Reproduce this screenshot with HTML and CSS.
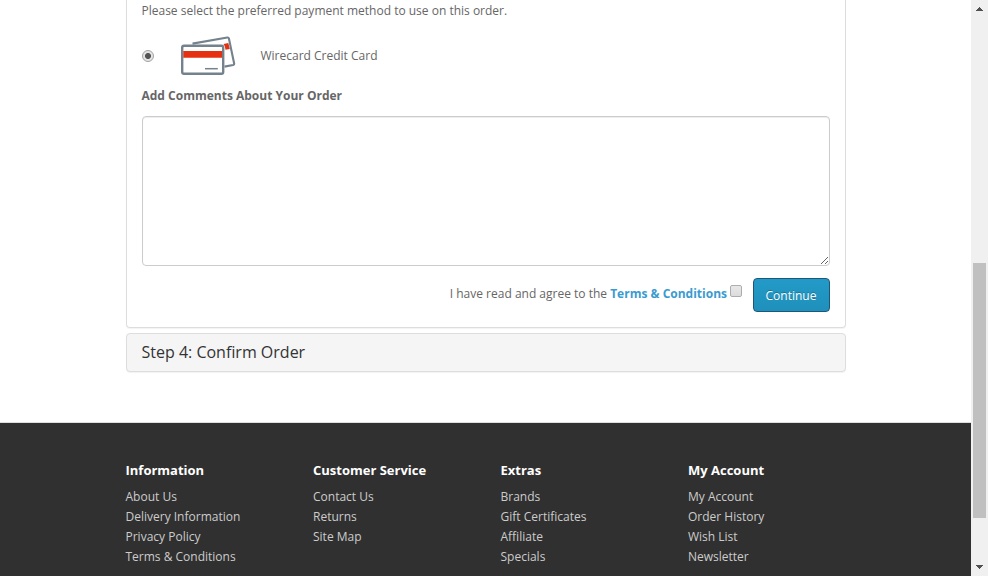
FILE: index.html
```html
<!DOCTYPE html>
<html lang="en">
<head>
<meta charset="utf-8">
<title>Checkout</title>
<link rel="stylesheet" href="styles.css">
</head>
<body>
<div class="page">
  <main class="checkout">
    <section class="panel payment">
      <p class="intro"><span>Please select the preferred payment method to use on this order.</span></p>
      <div class="method">
        <span class="radio"></span>
        <svg class="cards" width="56" height="40" viewBox="0 0 56 40" fill="none">
          <path d="M12.500 7.600 47.300 1.500q1.300-.2 1.600 1l5.200 24.800q.3 1.400-1 1.700l-8.600 1.600" stroke="#73828c" stroke-width="2.100"/>
          <path d="M43.500 8 48.300 7l1.500 6-4.300.8-.6-3.400z" fill="#e63012"/>
          <rect x="2.200" y="9.700" width="41" height="28" rx="1.800" fill="#fff" stroke="#73828c" stroke-width="2.400"/>
          <path d="M3.300 15h38.800v6.700H3.300z" fill="#e63012"/>
          <path d="M25 32.700h12.800" stroke="#73828c" stroke-width="1.500"/>
        </svg>
        <span class="method-name"><span>Wirecard Credit Card</span></span>
      </div>
      <p class="comments-label"><strong>Add Comments About Your Order</strong></p>
      <textarea class="comments"></textarea>
      <div class="actions">
        <span class="agree">I have read and agree to the <b>Terms &amp; Conditions</b></span>
        <span class="check"></span>
        <button class="continue"><span>Continue</span></button>
      </div>
    </section>
    <section class="panel step"><h4><span>Step 4: Confirm Order</span></h4></section>
  </main>
  <footer class="footer">
    <div class="column"><h5>Information</h5><ul><li>About Us</li><li>Delivery Information</li><li>Privacy Policy</li><li>Terms &amp; Conditions</li></ul></div>
    <div class="column"><h5>Customer Service</h5><ul><li>Contact Us</li><li>Returns</li><li>Site Map</li></ul></div>
    <div class="column"><h5>Extras</h5><ul><li>Brands</li><li>Gift Certificates</li><li>Affiliate</li><li>Specials</li></ul></div>
    <div class="column"><h5>My Account</h5><ul><li>My Account</li><li>Order History</li><li>Wish List</li><li>Newsletter</li></ul></div>
  </footer>
</div>
<div class="scrollbar">
  <svg width="7" height="4" viewBox="0 0 7 4" shape-rendering="crispEdges"><path d="M3 0h1v1h1v1h1v1h1v1H0V3h1V2h1V1h1z" fill="#505050"/></svg>
  <div class="thumb"></div>
  <svg width="7" height="4" viewBox="0 0 7 4" shape-rendering="crispEdges"><path d="M0 0h7v1H6v1H5v1H4v1H3V3H2V2H1V1H0z" fill="#505050"/></svg>
</div>
</body>
</html>
```
FILE: styles.css
```css
* { box-sizing: border-box; }
body {
  margin: 0;
  height: 576px;
  overflow: hidden;
  display: flex;
  background: #fff;
  color: #666;
  font: 12px/20px "Open Sans", sans-serif;
}
.page { width: 971px; height: 576px; display: flex; flex-direction: column; overflow: hidden; }
.checkout { width: 720px; height: 422px; flex: none; margin-left: 126px; }
.panel { border: 1px solid #ddd; border-radius: 4px; box-shadow: 0 1px 1px rgba(0,0,0,.05); }
.payment { height: 328px; padding: 1px 15px 0; border-top: 0; border-radius: 0 0 4px 4px; }
p { margin: 0 0 0 -.5px; }
.method { display: flex; align-items: center; height: 40px; margin-top: 15px; }
.radio {
  width: 12px; height: 12px; flex: none;
  border: 1px solid #a2a2a2; border-radius: 50%;
  background: radial-gradient(circle, #555 0 2.600px, #e4e4e4 3.400px);
}
.cards { flex: none; margin: 0 24.500px 0 26px; }
.comments-label { margin-top: 10px; }
.comments {
  display: block; width: 688px; height: 150px; margin: 10px 0 0; padding: 8px 13px;
  border: 1px solid #ccc; border-radius: 4px;
  box-shadow: inset 0 1px 1px rgba(0,0,0,.075); resize: vertical;
}
.actions { display: flex; justify-content: flex-end; margin-top: 12px; height: 34px; }
.agree { margin-top: 6px; white-space: pre; }
.agree b { color: #3a9bd0; }
.check {
  width: 12px; height: 12px; margin: 7px 11px 0 3px;
  border: 1px solid #adadad; border-radius: 2px;
  background: linear-gradient(#e8e8e8, #dcdcdc);
}
.continue {
  width: 77px; height: 34px; padding: 2px 1px 0 0;
  border: 1px solid #1f5577; border-radius: 4px;
  background: linear-gradient(#229ac8, #1f90bb);
  color: #fff; font: 12px/20px "Open Sans", sans-serif;
  text-shadow: 0 -1px 0 rgba(0,0,0,.25);
}
.step { height: 39px; margin-top: 5px; padding: 9px 14.500px; background: #f5f5f5; }
.step h4 { margin: 0; color: #333; font-size: 16px; line-height: 18px; font-weight: 400; }
.footer {
  flex: 1; display: flex; padding: 37px 0 0 125.500px;
  border-top: 1px solid #ddd; background: #303030; color: #ccc;
}
.column { width: 187.500px; flex: none; }
h5 { margin: 0 0 7px; color: #fff; font-size: 13px; line-height: 20px; font-weight: 700; }
ul { margin: 0; padding: 0; list-style: none; }
.scrollbar { width: 17px; height: 576px; padding: 7px 2px 7px; background: #f0f0f0; display: flex; flex-direction: column; align-items: center; }
.thumb { width: 13px; height: 255px; margin: 252px 0 auto; background: #c0c0c0; }
```
